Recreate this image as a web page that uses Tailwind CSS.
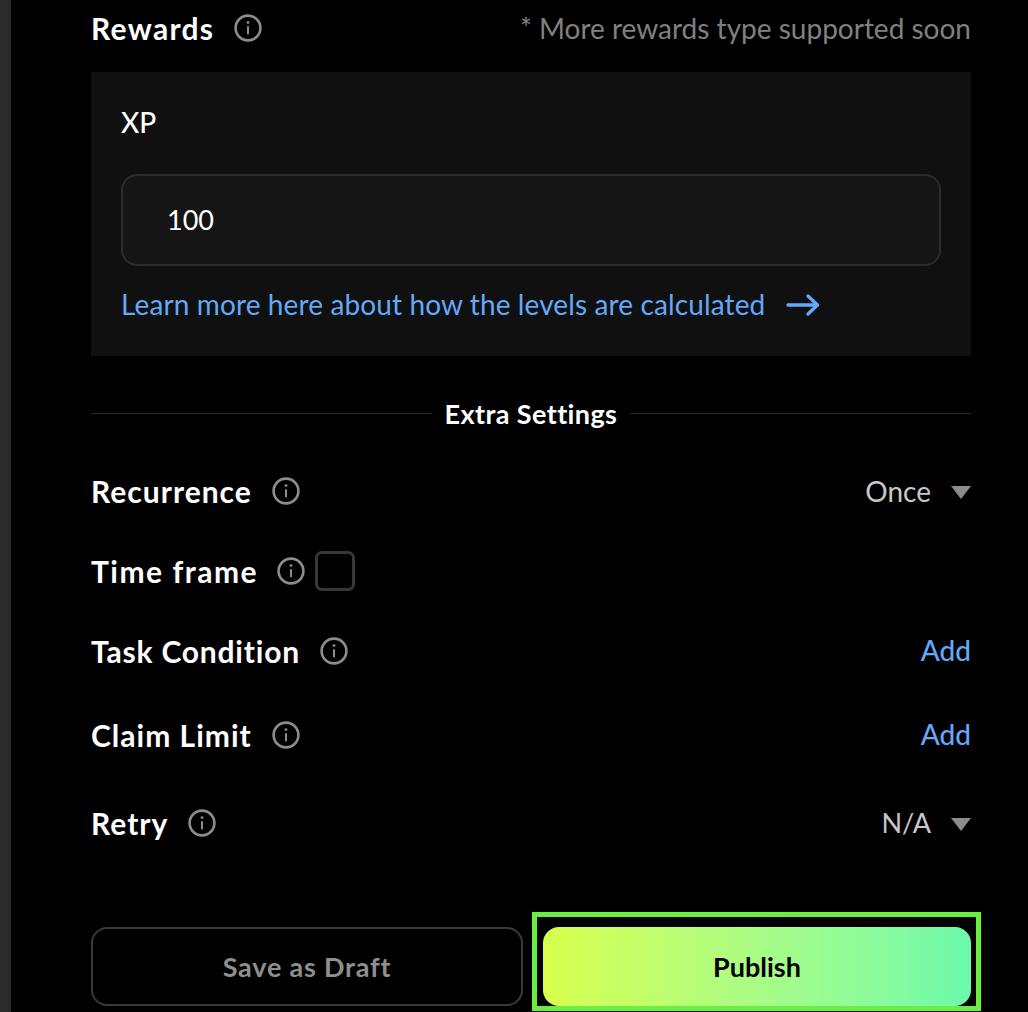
<!DOCTYPE html>
<html>
<head>
<meta charset="utf-8">
<script src="https://cdn.jsdelivr.net/npm/@tailwindcss/browser@4"></script>
</head>
<body class="bg-black">
<div class="flex w-[1028px] h-[1012px] overflow-hidden bg-black font-['Lato','Liberation_Sans',sans-serif]">
  <div class="w-[11px] shrink-0 bg-[#2b2b2b]"></div>
  <main class="ml-[80px] w-[880px] flex flex-col">
    <div class="h-[58px] -mt-[1px] flex items-center justify-between">
      <div class="flex items-center gap-[20px]">
        <span class="text-[30px] font-bold text-white tracking-[1.3px]">Rewards</span>
        <svg class="w-[28px] h-[28px]" viewBox="0 0 28 28" fill="none"><circle cx="14" cy="14" r="12.4" stroke="#8c8c8c" stroke-width="2.6"/><rect x="13" y="12" width="2" height="8.5" rx="1" fill="#8c8c8c"/><circle cx="14" cy="8.6" r="1.4" fill="#8c8c8c"/></svg>
      </div>
      <span class="text-[28px] text-[#808080]">* More rewards type supported soon</span>
    </div>
    <section class="mt-[15px] h-[284px] bg-[#101010] px-[30px] flex flex-col">
      <div class="h-[102px] pt-[30px] text-[28px] leading-[40px] font-medium text-white">XP</div>
      <div class="h-[92px] rounded-[16px] border-2 border-[#2b2b2b] bg-[#151515] flex items-center pl-[44px] text-[27px] text-white">100</div>
      <div class="mt-[22px] flex items-center gap-[21px] text-[#64a8f8]">
        <span class="-mt-[2px] text-[28px] leading-[36px] tracking-[0.12px]">Learn more here about how the levels are calculated</span>
        <svg class="w-[34px] h-[24px]" viewBox="0 0 34 24" fill="none" stroke="#64a8f8" stroke-width="3.4" stroke-linecap="round" stroke-linejoin="round"><path d="M2 12h29"/><path d="M22 3l9.5 9-9.5 9"/></svg>
      </div>
    </section>
    <div class="mt-[42px] h-[32px] flex items-center gap-[13px]">
      <div class="flex-1 h-px -mt-[2px] bg-[#2b2b2b]"></div>
      <span class="text-[27px] font-bold text-white tracking-[0.4px]">Extra Settings</span>
      <div class="flex-1 h-px -mt-[2px] bg-[#2b2b2b]"></div>
    </div>
    <div class="mt-[41px] h-[40px] flex items-center justify-between">
      <div class="flex items-center gap-[20px]">
        <span class="text-[30px] font-bold text-white tracking-[1px]">Recurrence</span>
        <svg class="w-[28px] h-[28px]" viewBox="0 0 28 28" fill="none"><circle cx="14" cy="14" r="12.4" stroke="#8c8c8c" stroke-width="2.6"/><rect x="13" y="12" width="2" height="8.5" rx="1" fill="#8c8c8c"/><circle cx="14" cy="8.6" r="1.4" fill="#8c8c8c"/></svg>
      </div>
      <div class="flex items-center gap-[20px]">
        <span class="text-[28px] text-[#c8c8c8]">Once</span>
        <svg class="w-[20px] h-[13px] mt-[2px]" viewBox="0 0 20 13"><path d="M0 0h20L10 13z" fill="#8c8c8c"/></svg>
      </div>
    </div>
    <div class="mt-[40px] h-[40px] flex items-center">
      <span class="text-[30px] font-bold text-white tracking-[1.5px]">Time frame</span>
      <svg class="ml-[19px] w-[28px] h-[28px]" viewBox="0 0 28 28" fill="none"><circle cx="14" cy="14" r="12.4" stroke="#8c8c8c" stroke-width="2.6"/><rect x="13" y="12" width="2" height="8.5" rx="1" fill="#8c8c8c"/><circle cx="14" cy="8.6" r="1.4" fill="#8c8c8c"/></svg>
      <div class="ml-[10px] w-[40px] h-[40px] rounded-[7px] border-[3px] border-[#383838]"></div>
    </div>
    <div class="mt-[40px] h-[40px] flex items-center justify-between">
      <div class="flex items-center gap-[20px]">
        <span class="text-[30px] font-bold text-white tracking-[0.8px]">Task Condition</span>
        <svg class="w-[28px] h-[28px]" viewBox="0 0 28 28" fill="none"><circle cx="14" cy="14" r="12.4" stroke="#8c8c8c" stroke-width="2.6"/><rect x="13" y="12" width="2" height="8.5" rx="1" fill="#8c8c8c"/><circle cx="14" cy="8.6" r="1.4" fill="#8c8c8c"/></svg>
      </div>
      <span class="-mt-[2px] text-[28px] font-medium text-[#64a8f8]">Add</span>
    </div>
    <div class="mt-[44px] h-[40px] flex items-center justify-between">
      <div class="flex items-center gap-[20px]">
        <span class="text-[30px] font-bold text-white tracking-[1px]">Claim Limit</span>
        <svg class="w-[28px] h-[28px]" viewBox="0 0 28 28" fill="none"><circle cx="14" cy="14" r="12.4" stroke="#8c8c8c" stroke-width="2.6"/><rect x="13" y="12" width="2" height="8.5" rx="1" fill="#8c8c8c"/><circle cx="14" cy="8.6" r="1.4" fill="#8c8c8c"/></svg>
      </div>
      <span class="-mt-[2px] text-[28px] font-medium text-[#64a8f8]">Add</span>
    </div>
    <div class="mt-[48px] h-[40px] flex items-center justify-between">
      <div class="flex items-center gap-[20px]">
        <span class="text-[30px] font-bold text-white tracking-[1px]">Retry</span>
        <svg class="w-[28px] h-[28px]" viewBox="0 0 28 28" fill="none"><circle cx="14" cy="14" r="12.4" stroke="#8c8c8c" stroke-width="2.6"/><rect x="13" y="12" width="2" height="8.5" rx="1" fill="#8c8c8c"/><circle cx="14" cy="8.6" r="1.4" fill="#8c8c8c"/></svg>
      </div>
      <div class="flex items-center gap-[20px]">
        <span class="text-[27px] text-[#c8c8c8]">N/A</span>
        <svg class="w-[20px] h-[13px] mt-[2px]" viewBox="0 0 20 13"><path d="M0 0h20L10 13z" fill="#8c8c8c"/></svg>
      </div>
    </div>
    <div class="mt-[84px] flex gap-[20px]">
      <button class="w-[432px] h-[79px] pt-[2px] rounded-[16px] border-2 border-[#3a3a3a] text-[27px] font-bold tracking-[0.8px] text-[#8f8f8f]">Save as Draft</button>
      <div class="relative w-[428px] h-[79px]">
        <button class="w-full h-full pt-[2px] rounded-[16px] bg-linear-to-r from-[#d8ff4a] to-[#6cf9ac] text-[27px] font-bold text-black">Publish</button>
        <div class="absolute -left-[11px] -right-[10px] -top-[15px] -bottom-[5px] border-[5px] border-[#6bee42] pointer-events-none"></div>
      </div>
    </div>
  </main>
</div>
</body>
</html>
